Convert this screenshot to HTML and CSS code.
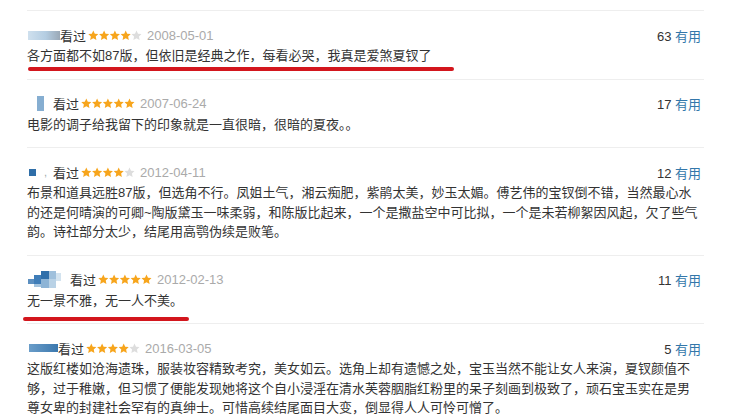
FILE: index.html
```html
<!DOCTYPE html>
<html lang="zh-CN">
<head>
    <meta charset="UTF-8">
    <meta name="viewport" content="width=device-width, initial-scale=1.0">
    <title>短评</title>
    <link rel="stylesheet" href="styles.css">
</head>
<body>
    <svg class="defs" width="0" height="0">
        <symbol id="star" viewBox="0 0 10.4 10">
            <polygon points="5.2,0.2 6.67,3.38 10.15,3.79 7.58,6.17 8.26,9.61 5.2,7.9 2.14,9.61 2.82,6.17 0.25,3.79 3.73,3.38"/>
        </symbol>
    </svg>

    <div class="comments">

        <div class="review">
            <div class="head">
                <span class="who">
                    <i class="av av1"></i>
                    <span class="saw">看过</span>
                    <svg class="stars" viewBox="0 0 54 11"><use href="#star" x="0" width="10.6" height="10.6"/><use href="#star" x="10.8" width="10.6" height="10.6"/><use href="#star" x="21.6" width="10.6" height="10.6"/><use href="#star" x="32.4" width="10.6" height="10.6"/><use class="off" href="#star" x="43.2" width="10.6" height="10.6"/></svg>
                    <span class="date">2008-05-01</span>
                </span>
                <span class="votes">63 <a href="#">有用</a></span>
            </div>
            <p class="text">各方面都不如87版，但依旧是经典之作，每看必哭，我真是爱煞夏钗了</p>
            <span class="mark mark1"></span>
        </div>

        <div class="review">
            <div class="head">
                <span class="who">
                    <i class="av av2"></i>
                    <span class="saw">看过</span>
                    <svg class="stars" viewBox="0 0 54 11"><use href="#star" x="0" width="10.6" height="10.6"/><use href="#star" x="10.8" width="10.6" height="10.6"/><use href="#star" x="21.6" width="10.6" height="10.6"/><use href="#star" x="32.4" width="10.6" height="10.6"/><use href="#star" x="43.2" width="10.6" height="10.6"/></svg>
                    <span class="date">2007-06-24</span>
                </span>
                <span class="votes">17 <a href="#">有用</a></span>
            </div>
            <p class="text">电影的调子给我留下的印象就是一直很暗，很暗的夏夜。。</p>
        </div>

        <div class="review">
            <div class="head">
                <span class="who">
                    <i class="av av3"></i>
                    <span class="comma">,</span>
                    <span class="saw">看过</span>
                    <svg class="stars" viewBox="0 0 54 11"><use href="#star" x="0" width="10.6" height="10.6"/><use href="#star" x="10.8" width="10.6" height="10.6"/><use href="#star" x="21.6" width="10.6" height="10.6"/><use href="#star" x="32.4" width="10.6" height="10.6"/><use class="off" href="#star" x="43.2" width="10.6" height="10.6"/></svg>
                    <span class="date">2012-04-11</span>
                </span>
                <span class="votes">12 <a href="#">有用</a></span>
            </div>
            <p class="text">布景和道具远胜87版，但选角不行。凤姐土气，湘云痴肥，紫鹃太美，妙玉太媚。傅艺伟的宝钗倒不错，当然最心水的还是何晴演的可卿~陶版黛玉一味柔弱，和陈版比起来，一个是撒盐空中可比拟，一个是未若柳絮因风起，欠了些气韵。诗社部分太少，结尾用高鹗伪续是败笔。</p>
        </div>

        <div class="review">
            <div class="head">
                <span class="who">
                    <svg class="av4" viewBox="0 0 34 17">
                        <rect x="0" y="8" width="6" height="5" fill="#5b8fc0"/>
                        <rect x="6" y="4" width="7" height="9" fill="#3f7db8"/>
                        <rect x="13" y="0" width="8" height="8" fill="#2f6faa"/>
                        <rect x="13" y="8" width="8" height="9" fill="#8db4d6"/>
                        <rect x="21" y="0" width="7" height="8" fill="#9fc0dc"/>
                        <rect x="21" y="8" width="7" height="9" fill="#b9d2e6"/>
                        <rect x="28" y="2" width="5" height="8" fill="#d3e3ef"/>
                        <rect x="6" y="13" width="7" height="3" fill="#a5c4de"/>
                    </svg>
                    <span class="saw">看过</span>
                    <svg class="stars" viewBox="0 0 54 11"><use href="#star" x="0" width="10.6" height="10.6"/><use href="#star" x="10.8" width="10.6" height="10.6"/><use href="#star" x="21.6" width="10.6" height="10.6"/><use href="#star" x="32.4" width="10.6" height="10.6"/><use href="#star" x="43.2" width="10.6" height="10.6"/></svg>
                    <span class="date">2012-02-13</span>
                </span>
                <span class="votes">11 <a href="#">有用</a></span>
            </div>
            <p class="text">无一景不雅，无一人不美。</p>
            <span class="mark mark2"></span>
        </div>

        <div class="review">
            <div class="head">
                <span class="who">
                    <i class="av av5"></i>
                    <span class="saw">看过</span>
                    <svg class="stars" viewBox="0 0 54 11"><use href="#star" x="0" width="10.6" height="10.6"/><use href="#star" x="10.8" width="10.6" height="10.6"/><use href="#star" x="21.6" width="10.6" height="10.6"/><use href="#star" x="32.4" width="10.6" height="10.6"/><use class="off" href="#star" x="43.2" width="10.6" height="10.6"/></svg>
                    <span class="date">2016-03-05</span>
                </span>
                <span class="votes">5 <a href="#">有用</a></span>
            </div>
            <p class="text">这版红楼如沧海遗珠，服装妆容精致考究，美女如云。选角上却有遗憾之处，宝玉当然不能让女人来演，夏钗颜值不够，过于稚嫩，但习惯了便能发现她将这个自小浸淫在清水芙蓉胭脂红粉里的呆子刻画到极致了，顽石宝玉实在是男尊女卑的封建社会罕有的真绅士。可惜高续结尾面目大变，倒显得人人可怜可憎了。</p>
        </div>

    </div>
</body>
</html>
```

FILE: styles.css
```css
*{
    margin: 0;
    padding: 0;
    box-sizing: border-box;
}
body{
    background-color: #fff;
    font-family: "Helvetica Neue", "Liberation Sans", "Noto Sans CJK SC", sans-serif;
    font-size: 13px;
    color: #333;
    overflow: hidden;
}
.defs{
    position: absolute;
}
.comments{
    width: 677px;
    margin-left: 27px;
    padding-top: 10px;
}
.review{
    position: relative;
    border-top: 1px solid #eee;
    padding: 14px 0 13px;
}
.head{
    display: flex;
    align-items: center;
    height: 20px;
    margin-bottom: 1px;
}
.who{
    display: flex;
    align-items: center;
}
.saw{
    color: #333;
}
.stars{
    width: 54px;
    height: 11px;
    margin-left: 2px;
    fill: #f7a51c;
}
.stars .off{
    fill: #ddd;
}
.date{
    margin-left: 5px;
    color: #aaa;
}
.votes{
    margin-left: auto;
    margin-right: 3px;
    color: #333;
}
.votes a{
    color: #3377aa;
    text-decoration: none;
}
.text{
    width: 674px;
    line-height: 19.5px;
    color: #333;
}
/* blurred user names */
.av{
    display: block;
}
.av1{
    width: 32px;
    height: 9px;
    margin-left: 1px;
    background: linear-gradient(to right, #cfe0ee, #b4cde2 55%, #9aa8b6);
}
.av2{
    width: 7px;
    height: 15px;
    margin: 0 9px 0 10px;
    background-color: #86aed1;
}
.av3{
    width: 7px;
    height: 7px;
    margin: 0 0 0 2px;
    background-color: #2f6ea8;
}
.comma{
    margin: 0 6px 0 8px;
    color: #9aa;
    font-size: 11px;
}
.av4{
    width: 34px;
    height: 17px;
    margin: 0 8px 0 1px;
}
.av5{
    width: 29px;
    height: 8px;
    margin-left: 2px;
    background: linear-gradient(to right, #6a9dc9, #3c78ae);
}
/* red underline marks */
.mark{
    position: absolute;
    height: 4px;
    border-radius: 2px;
    background-color: #d3161d;
}
.mark1{
    top: 56px;
    left: 1px;
    width: 426px;
}
.mark2{
    top: 61px;
    left: -4px;
    width: 166px;
}
```
